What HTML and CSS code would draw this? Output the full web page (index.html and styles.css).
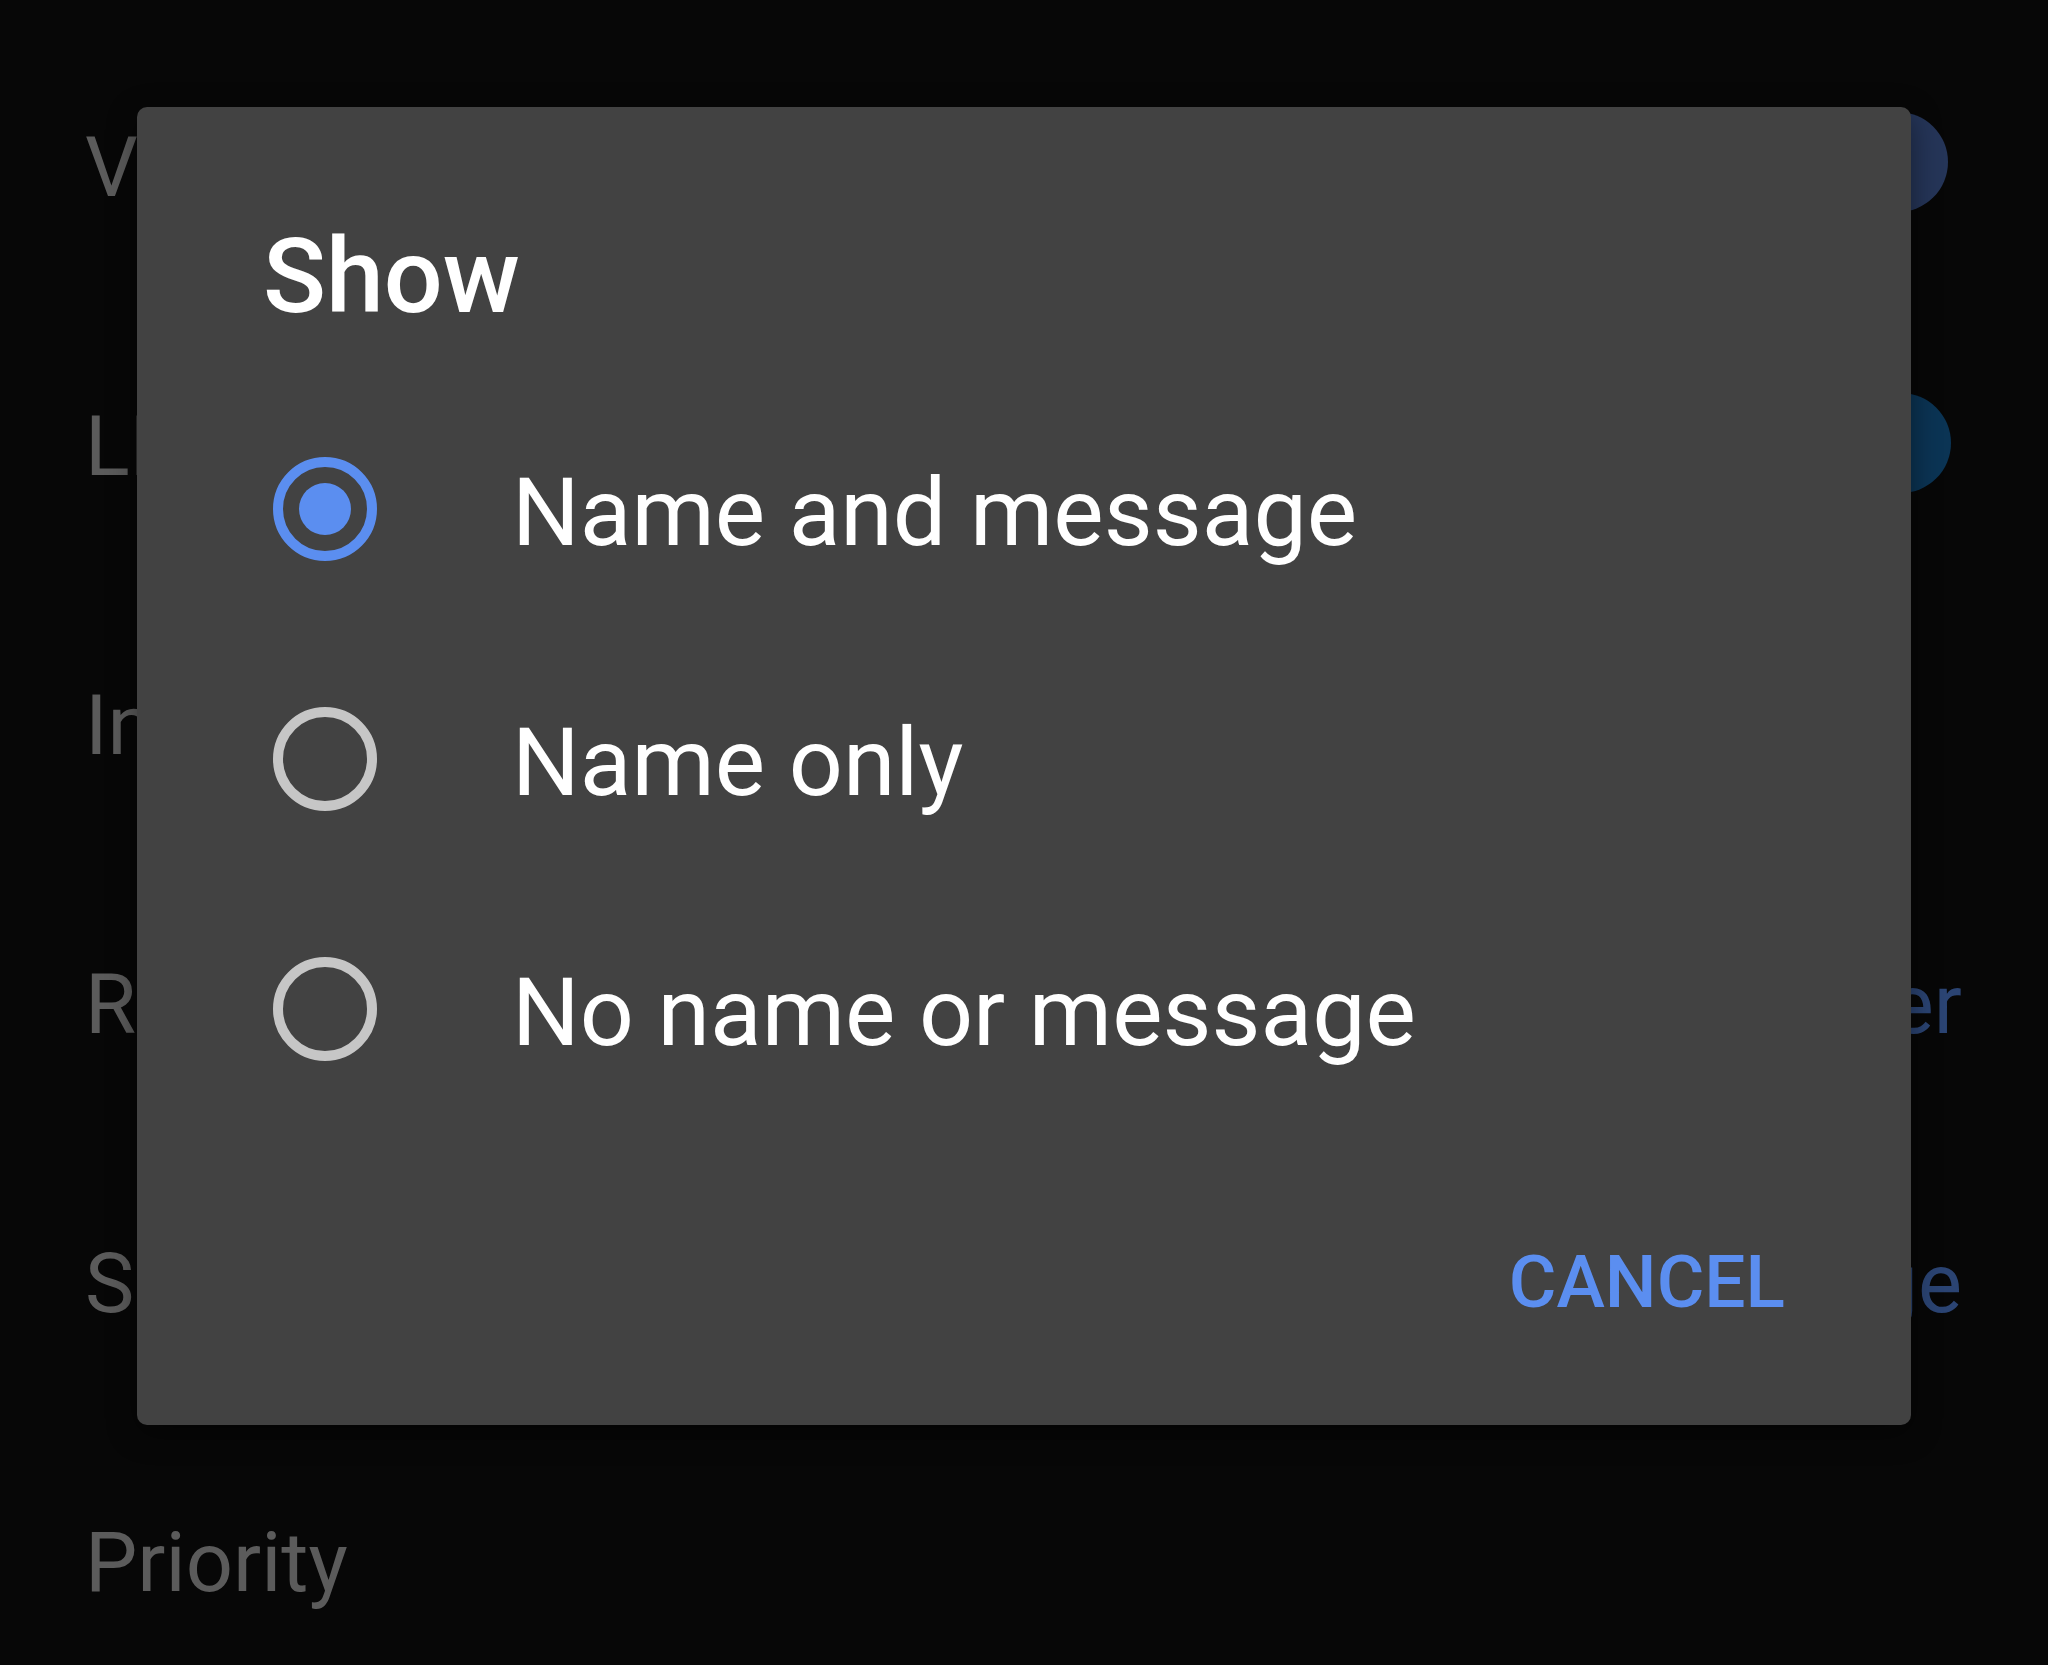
FILE: index.html
```html
<!DOCTYPE html>
<html lang="en">
<head>
<meta charset="utf-8">
<title>Show</title>
<link rel="stylesheet" href="styles.css">
</head>
<body>
<div class="screen">
  <ul class="prefs" aria-hidden="true">
    <li class="pref"><span class="pref-title">Vibrate</span><span class="thumb thumb-switch"></span></li>
    <li class="pref"><span class="pref-title">LED color</span><span class="thumb thumb-led"></span></li>
    <li class="pref"><span class="pref-title">In-thread notifications</span></li>
    <li class="pref"><span class="pref-title">Repeat alerts</span><span class="pref-value">Never</span></li>
    <li class="pref"><span class="pref-title">Show</span><span class="pref-value">Name and message</span></li>
    <li class="pref"><span class="pref-title">Priority</span></li>
  </ul>

  <div class="dialog" role="dialog" aria-labelledby="dlg-title">
    <h2 class="dialog-title" id="dlg-title">Show</h2>
    <ul class="choices">
      <li class="choice">
        <span class="radio radio-on"><span class="radio-dot"></span></span>
        <span class="choice-label">Name and message</span>
      </li>
      <li class="choice">
        <span class="radio"></span>
        <span class="choice-label">Name only</span>
      </li>
      <li class="choice">
        <span class="radio"></span>
        <span class="choice-label">No name or message</span>
      </li>
    </ul>
    <div class="actions">
      <button class="btn-text" type="button">CANCEL</button>
    </div>
  </div>
</div>
</body>
</html>
```

FILE: styles.css
```css
html, body {
  margin: 0;
  padding: 0;
  background: #070707;
}

body {
  font-family: "Roboto", "Noto Sans", "Liberation Sans", sans-serif;
  width: 2048px;
  height: 1665px;
  overflow: hidden;
}

.screen {
  position: relative;
  width: 2048px;
  height: 1665px;
  overflow: hidden;
}

/* background preference list (dimmed by scrim) */
.prefs {
  list-style: none;
  margin: 0;
  padding: 28px 0 0 0;
}

.pref {
  display: flex;
  align-items: center;
  height: 279px;
  padding: 0 86px 0 85px;
  font-size: 83px;
  line-height: 279px;
  color: #5b5b5b;
}

.pref-title {
  flex: 1;
  white-space: nowrap;
}

.pref-value {
  color: #2b4473;
  white-space: nowrap;
}

.thumb {
  width: 100px;
  height: 100px;
  border-radius: 50%;
  margin-right: 14px;
  margin-bottom: 12px;
}

.thumb-switch {
  background: #253558;
}

.thumb-led {
  background: #0b3454;
  margin-bottom: 8px;
  margin-right: 11px;
}

/* dialog */
.dialog {
  position: absolute;
  left: 137px;
  top: 107px;
  width: 1774px;
  height: 1318px;
  box-sizing: border-box;
  background: #424242;
  border-radius: 10px;
  box-shadow: 0 8px 30px rgba(0, 0, 0, 0.45);
  padding: 118px 125px 0 136px;
  display: flex;
  flex-direction: column;
}

.dialog-title {
  margin: 0 0 55px -10px;
  font-size: 104px;
  line-height: 104px;
  font-weight: 500;
  color: #ffffff;
}

.choices {
  list-style: none;
  margin: 0;
  padding: 0;
}

.choice {
  display: flex;
  align-items: center;
  height: 250px;
}

.radio {
  flex: none;
  width: 104px;
  height: 104px;
  box-sizing: border-box;
  border: 10px solid #c6c6c6;
  border-radius: 50%;
  display: flex;
  align-items: center;
  justify-content: center;
}

.radio-on {
  border-color: #5b8ef0;
}

.radio-dot {
  width: 52px;
  height: 52px;
  border-radius: 50%;
  background: #5b8ef0;
}

.choice-label {
  margin-left: 135px;
  margin-top: 8px;
  font-size: 95px;
  line-height: 110px;
  color: #ffffff;
  white-space: nowrap;
}

.actions {
  display: flex;
  justify-content: flex-end;
  margin-top: 112px;
}

.btn-text {
  background: none;
  border: 0;
  padding: 0;
  margin: 0 1px 0 0;
  font-family: inherit;
  font-size: 73px;
  line-height: 73px;
  font-weight: 500;
  color: #5b8ef0;
  cursor: pointer;
}
```
